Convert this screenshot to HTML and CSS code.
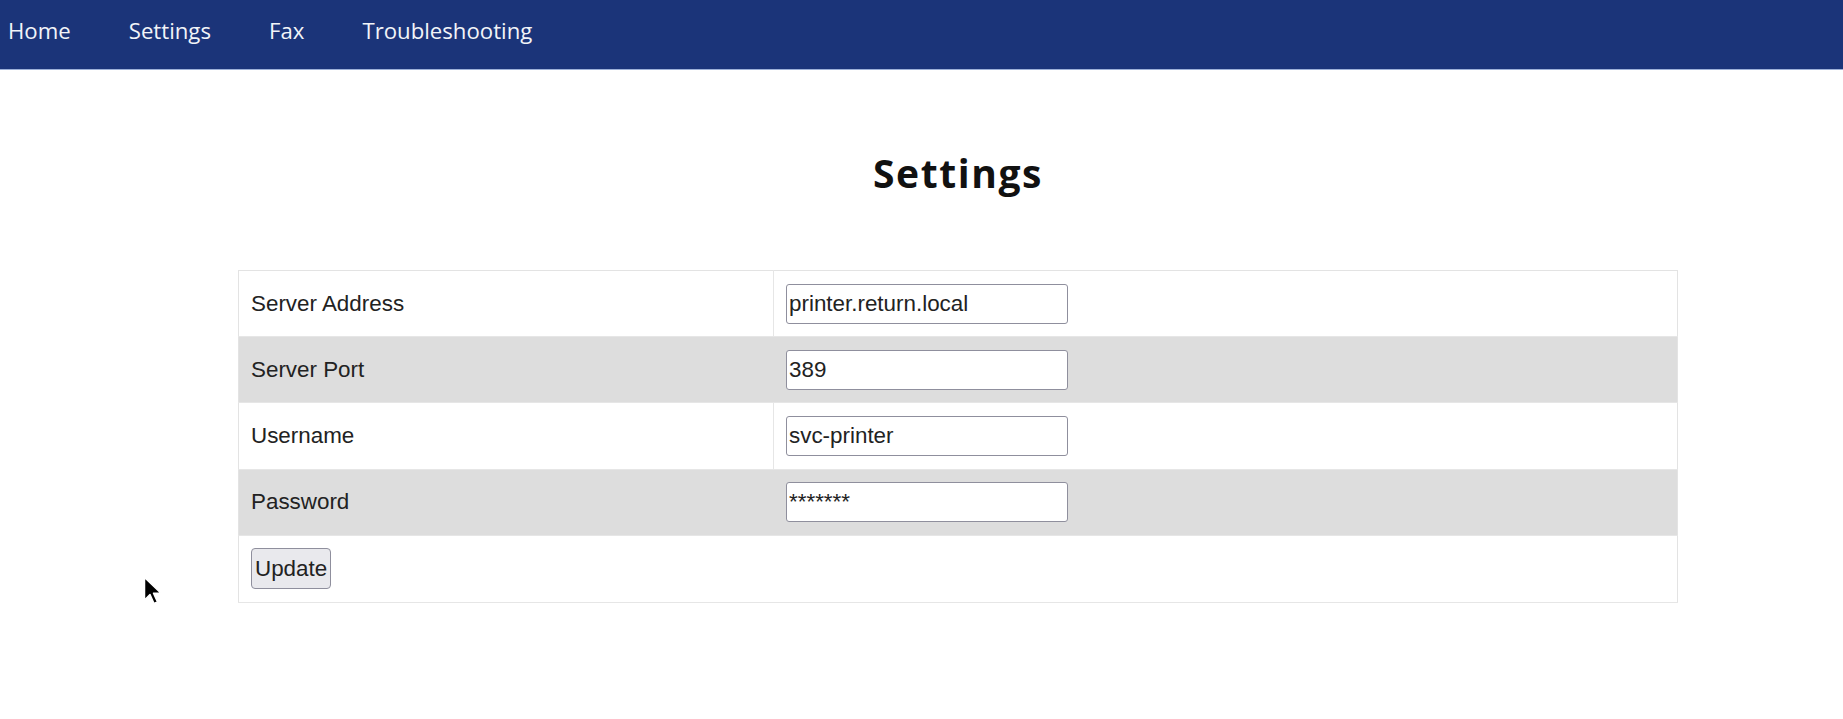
FILE: index.html
```html
<!DOCTYPE html>
<html>
<head>
<meta charset="utf-8">
<title>Settings</title>
<link rel="stylesheet" href="styles.css">
</head>
<body>
<nav class="topnav">
  <a class="nav-link" href="#">Home</a>
  <a class="nav-link" href="#">Settings</a>
  <a class="nav-link" href="#">Fax</a>
  <a class="nav-link" href="#">Troubleshooting</a>
</nav>
<main class="content">
  <h1 class="page-title">Settings</h1>
  <form class="settings-form">
    <table class="settings-table">
      <tr class="row-light">
        <td class="label-cell">Server Address</td>
        <td class="input-cell"><input class="field" type="text" value="printer.return.local"></td>
      </tr>
      <tr class="row-dark">
        <td class="label-cell">Server Port</td>
        <td class="input-cell"><input class="field" type="text" value="389"></td>
      </tr>
      <tr class="row-light">
        <td class="label-cell">Username</td>
        <td class="input-cell"><input class="field" type="text" value="svc-printer"></td>
      </tr>
      <tr class="row-dark">
        <td class="label-cell">Password</td>
        <td class="input-cell"><input class="field" type="text" value="*******"></td>
      </tr>
      <tr class="row-light">
        <td class="button-cell" colspan="2"><button class="update-btn" type="button">Update</button></td>
      </tr>
    </table>
  </form>
</main>
<svg class="cursor" width="20" height="30" viewBox="0 0 20 30">
  <path d="M1.5 1.5 L1.5 24 L7 18.5 L11 27.5 L14.5 26 L10.5 17.2 L18 17.2 Z" fill="#000" stroke="#fff" stroke-width="1.5" stroke-linejoin="round"/>
</svg>
</body>
</html>
```
FILE: styles.css
```css
html, body {
  margin: 0;
  padding: 0;
  background: #ffffff;
}

body {
  font-family: "Liberation Sans", Arial, sans-serif;
  color: #222;
}

.topnav {
  display: flex;
  align-items: center;
  gap: 58px;
  height: 69px;
  padding-left: 8px;
  background: #1b3479;
  border-bottom: 1px solid #9db0d8;
  box-sizing: content-box;
}

.nav-link {
  font-family: "Open Sans", "Noto Sans", sans-serif;
  font-size: 22.2px;
  color: #f2f4f8;
  text-decoration: none;
  line-height: 1;
  margin-top: -6px;
}

.content {
  margin-left: 73px;
  display: flex;
  flex-direction: column;
  align-items: center;
}

.page-title {
  font-family: "Open Sans", "Noto Sans", sans-serif;
  font-weight: 700;
  font-size: 39px;
  letter-spacing: 1.6px;
  line-height: 56px;
  margin: 75px 0 69px;
  color: #111;
}

.settings-form {
  margin: 0;
}

.settings-table {
  width: 1440px;
  border-collapse: collapse;
  border: 1px solid #e3e3e3;
}

.settings-table td {
  padding: 12.6px 12px;
  border-bottom: 1px solid #e6e6e6;
  vertical-align: middle;
}

.row-light {
  background: #ffffff;
}

.row-dark {
  background: #dddddd;
}

.label-cell {
  width: 510px;
  font-size: 22.4px;
  color: #222;
  border-right: 1px solid #e6e6e6;
}

.row-dark .label-cell {
  border-right-color: #dddddd;
}

.field {
  box-sizing: border-box;
  width: 282px;
  height: 40px;
  margin: 0;
  padding: 0 2px;
  border: 1px solid #8f8f9d;
  border-radius: 3px;
  background: #fff;
  font-family: "Liberation Sans", Arial, sans-serif;
  font-size: 22.4px;
  color: #222;
  display: block;
}

.update-btn {
  box-sizing: border-box;
  height: 41px;
  margin: 0;
  padding: 0 3px;
  background: #e9e9ed;
  border: 1px solid #8f8f9d;
  border-radius: 4px;
  font-family: "Liberation Sans", Arial, sans-serif;
  font-size: 22.4px;
  color: #222;
  display: block;
}

.cursor {
  position: absolute;
  left: 143px;
  top: 576px;
}
```
